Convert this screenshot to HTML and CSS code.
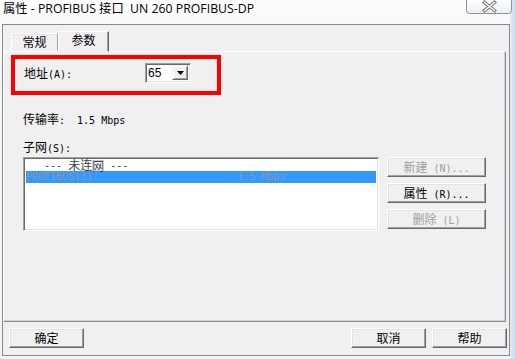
FILE: index.html
```html
<!DOCTYPE html>
<html lang="zh-CN">
<head>
<meta charset="utf-8">
<title>属性 - PROFIBUS 接口</title>
<link rel="stylesheet" href="styles.css">
</head>
<body>
<div class="window">
  <div class="titlebar">
    <span class="title">属性 - PROFIBUS 接口&nbsp; UN 260 PROFIBUS-DP</span>
    <div class="close">
      <svg width="46" height="15" viewBox="0 0 46 15">
        <defs>
          <linearGradient id="cg" x1="0" y1="0" x2="0" y2="1">
            <stop offset="0" stop-color="#ffffff"/>
            <stop offset="1" stop-color="#eceef1"/>
          </linearGradient>
        </defs>
        <path d="M0.5 0 V11.5 Q0.5 14.5 3.5 14.5 H42.5 Q45.5 14.5 45.5 11.5 V0" fill="url(#cg)" stroke="#8d9199"/>
        <path d="M18.5 3.5 L28.5 11.5 M28.5 3.5 L18.5 11.5" stroke="#7a7a7a" stroke-width="3.4" stroke-linecap="square"/>
        <path d="M18.5 3.5 L28.5 11.5 M28.5 3.5 L18.5 11.5" stroke="#ffffff" stroke-width="1.4" stroke-linecap="square"/>
      </svg>
    </div>
  </div>
  <div class="client">
    <div class="tabs">
      <div class="tab">常规</div>
      <div class="tab active">参数</div>
    </div>
    <div class="panel">
      <div class="addr-box">
        <span class="addr-label">地址<span class="lat">(A):</span></span>
        <div class="combo">
          <span class="combo-val">65</span>
          <span class="combo-btn">
            <svg width="7" height="4" viewBox="0 0 7 4"><path d="M0 0 H7 L3.5 4 Z" fill="#000"/></svg>
          </span>
        </div>
      </div>
      <div class="rate">传输率<span class="lat">:&nbsp; 1.5 Mbps</span></div>
      <div class="subnet-label">子网<span class="lat">(S):</span></div>
      <div class="subnet-row">
        <div class="list">
          <div class="item first"><span class="lat">&nbsp;&nbsp;&nbsp;--- </span>未连<span class="focus">网</span><span class="lat"> ---</span></div>
          <div class="item sel"><span class="lat name">PROFIBUS(3)</span><span class="lat">1.5 Mbps</span></div>
        </div>
        <div class="side-btns">
          <div class="btn disabled">新建<span class="lat"> (N)...</span></div>
          <div class="btn">属性<span class="lat"> (R)...</span></div>
          <div class="btn disabled">删除<span class="lat"> (L)</span></div>
        </div>
      </div>
    </div>
    <div class="footer">
      <div class="btn wide">确定</div>
      <div class="right-group">
        <div class="btn wide">取消</div>
        <div class="btn wide">帮助</div>
      </div>
    </div>
  </div>
</div>
</body>
</html>
```
FILE: styles.css
```css
* {
  box-sizing: border-box;
  margin: 0;
  padding: 0;
}

body {
  width: 515px;
  height: 359px;
  overflow: hidden;
  font-family: "Noto Sans CJK SC", sans-serif;
  color: #000;
}

.window {
  width: 515px;
  height: 359px;
  background: linear-gradient(90deg, rgba(255,255,255,0) 0, rgba(255,255,255,0) 509px, #d6e4f1 512px, #c9dced 515px),
              linear-gradient(180deg, #fdfdfd 0px, #f7f8f9 24px, #f3f4f6 100%);
}

.titlebar {
  height: 24px;
  display: flex;
  justify-content: space-between;
  align-items: flex-start;
}

.title {
  font-family: "Open Sans", "Noto Sans CJK SC", sans-serif;
  font-size: 12.3px;
  line-height: 17px;
  padding: 0 0 0 3px;
  white-space: nowrap;
  flex: none;
}

.close {
  width: 46px;
  height: 15px;
  margin-right: 3px;
  margin-top: -1px;
  flex: none;
}

.close svg {
  display: block;
}

.client {
  margin-left: 2px;
  width: 508px;
  height: 332px;
  border: 1px solid #8a8a8a;
  background: #f0f0f0;
  display: flex;
  flex-direction: column;
}

.lat {
  font-family: "DejaVu Sans Mono", "Liberation Mono", monospace;
  font-size: 10px;
  line-height: 1;
}

/* Tabs */
.tabs {
  display: flex;
  align-items: flex-end;
  height: 20px;
  margin-top: 6px;
  padding-left: 8px;
}

.tab {
  width: 47px;
  height: 18px;
  border: 1px solid;
  border-color: #ffffff #a0a0a0 transparent #ffffff;
  box-shadow: inset 0 1px 0 #e3e3e3;
  font-size: 12px;
  line-height: 15px;
  text-align: center;
}

.tab.active {
  width: 51px;
  height: 21px;
  margin-bottom: -1px;
  position: relative;
  z-index: 1;
  background: #f0f0f0;
  border-color: #ffffff #696969 transparent #ffffff;
  box-shadow: inset -1px 0 0 #a0a0a0;
  line-height: 16px;
}

/* Panel */
.panel {
  width: 503px;
  height: 271px;
  border: 1px solid;
  border-color: #ffffff #8c8c8c #8c8c8c #ffffff;
  box-shadow: inset -1px -1px 0 #d0d0d0;
}

.addr-box {
  width: 210px;
  height: 40px;
  margin: 3px 0 0 7px;
  border: 4px solid #ff0000;
  display: flex;
  align-items: flex-start;
  padding: 4px 0 0 9px;
}

.addr-label {
  width: 121px;
  height: 19px;
  font-size: 12px;
  line-height: 19px;
}

.combo {
  width: 46px;
  height: 20px;
  background: #ffffff;
  border: 1px solid;
  border-color: #a0a0a0 #ffffff #ffffff #a0a0a0;
  box-shadow: inset 1px 1px 0 #696969, inset -1px -1px 0 #e3e3e3;
  display: flex;
  align-items: center;
  justify-content: space-between;
  padding: 1px 2px 2px 2px;
}

.combo-val {
  font-family: "Liberation Sans", sans-serif;
  font-size: 12px;
  line-height: 14px;
  padding-top: 1px;
}

.combo-btn {
  width: 16px;
  height: 15px;
  background: #f0f0f0;
  border: 1px solid;
  border-color: #f0f0f0 #696969 #696969 #f0f0f0;
  box-shadow: inset 1px 1px 0 #ffffff, inset -1px -1px 0 #a0a0a0;
  display: flex;
  align-items: center;
  justify-content: center;
}

.combo-btn svg {
  display: block;
}

.rate {
  height: 14px;
  margin: 17px 0 0 19px;
  font-size: 12px;
  line-height: 14px;
}

.subnet-label {
  height: 14px;
  margin: 14px 0 0 19px;
  font-size: 12px;
  line-height: 14px;
}

.subnet-row {
  display: flex;
  align-items: flex-start;
  margin: 3px 0 0 19px;
}

.list {
  width: 356px;
  height: 74px;
  background: #ffffff;
  border: 1px solid;
  border-color: #a0a0a0 #ffffff #ffffff #a0a0a0;
  box-shadow: inset 1px 1px 0 #696969, inset -1px -1px 0 #e3e3e3;
  padding: 2px 2px 2px 2px;
}

.item {
  height: 12px;
  font-size: 12px;
  line-height: 12px;
  white-space: pre;
  color: #3c3c3c;
  display: flex;
  align-items: center;
}

.item.first {
  height: 11px;
  align-items: flex-end;
}

.focus {
  outline: 1px solid #c8c8c8;
  outline-offset: -1px;
  line-height: 11px;
}

.item.sel {
  background: #3399ff;
  color: #8597b0;
  height: 12px;
}

.item .name {
  width: 211px;
}

.side-btns {
  display: flex;
  flex-direction: column;
  gap: 6px;
  margin-left: 8px;
}

.btn {
  width: 99px;
  height: 20px;
  background: #f0f0f0;
  border: 1px solid;
  border-color: #ffffff #696969 #696969 #ffffff;
  box-shadow: inset -1px -1px 0 #a0a0a0, inset 1px 1px 0 #e3e3e3;
  font-size: 12px;
  line-height: 17px;
  text-align: center;
  white-space: pre;
}

.btn.disabled {
  color: #a0a0a0;
}

.btn.wide {
  width: 75px;
}

.footer {
  display: flex;
  justify-content: space-between;
  margin-top: 6px;
  padding: 0 2px 0 6px;
}

.right-group {
  display: flex;
  gap: 6px;
}
```
